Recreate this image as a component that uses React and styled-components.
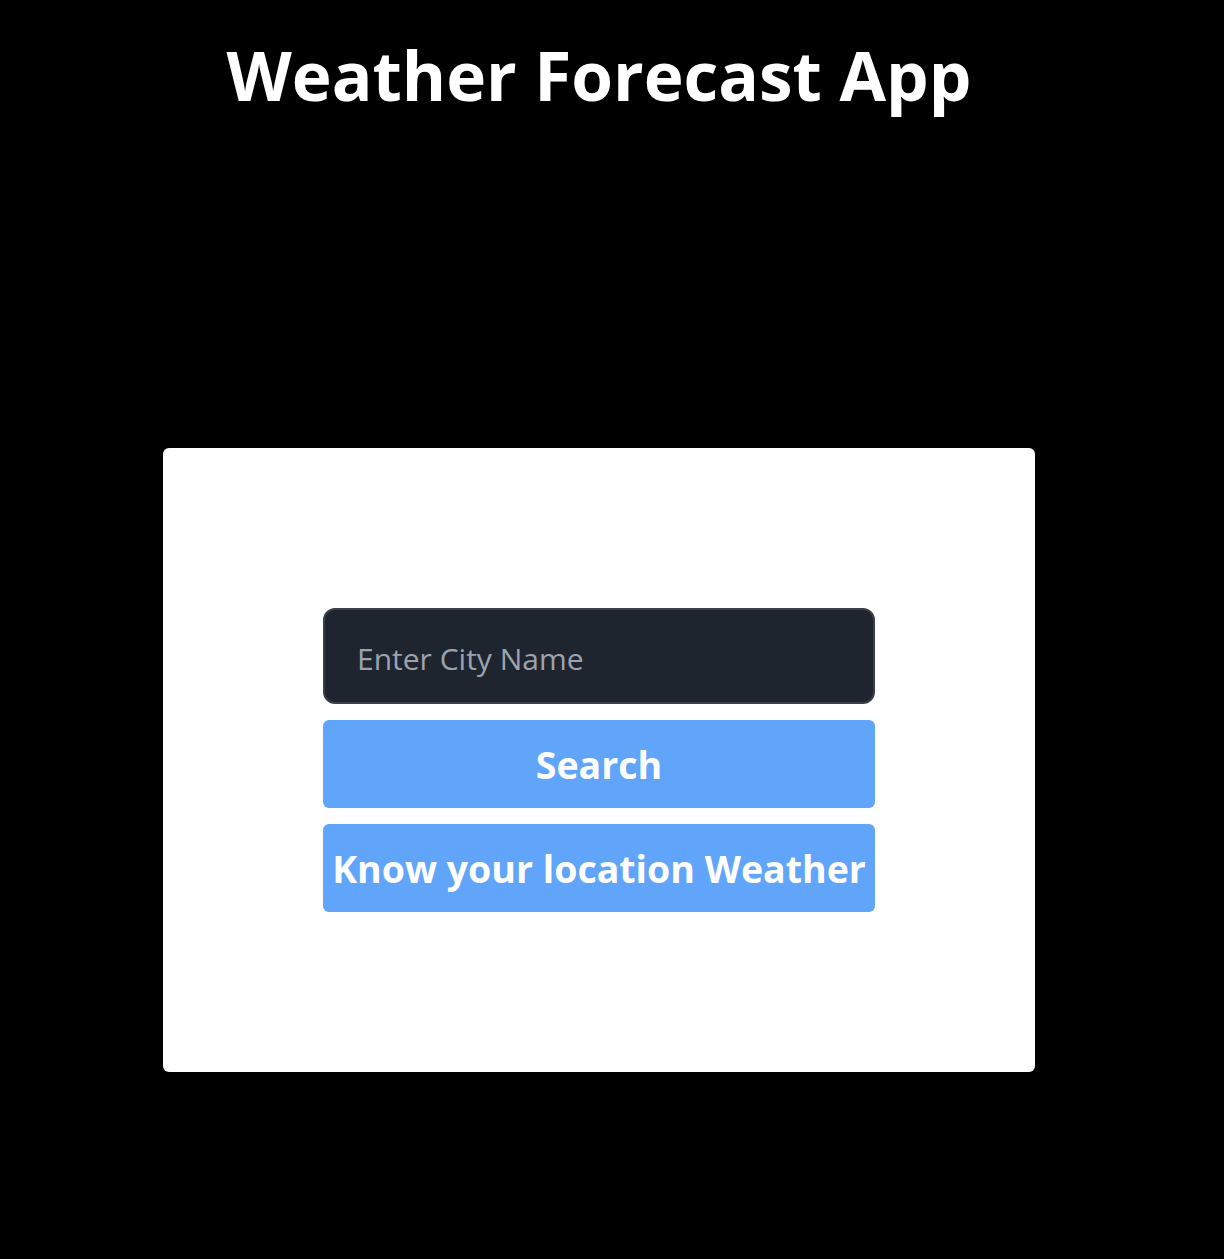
import React, { useState } from 'react';
import styled, { createGlobalStyle } from 'styled-components';

const GlobalStyle = createGlobalStyle`
    html, body {
        margin: 0;
        padding: 0;
        background: #000;
    }
    body {
        font-family: "Open Sans", "Noto Sans", sans-serif;
        color: #fff;
    }
`;

const Page = styled.div`
    width: 1198px;
    min-height: 1259px;
    display: flex;
    flex-direction: column;
    align-items: center;
`;

const Title = styled.h1`
    margin: 24px 0 0;
    height: 102px;
    font-size: 67.5px;
    line-height: 102px;
    font-weight: 700;
`;

const Card = styled.div`
    margin-top: 322px;
    width: 872px;
    box-sizing: border-box;
    padding: 160px;
    background: #fff;
    border-radius: 6px;
    display: flex;
    flex-direction: column;
    gap: 16px;
`;

const CityInput = styled.input`
    height: 96px;
    box-sizing: border-box;
    padding: 4px 32px 0;
    background: #1f252e;
    border: 2px solid #394049;
    border-radius: 12px;
    color: #fff;
    font-family: "Open Sans", sans-serif;
    font-size: 30px;
    outline: none;

    &::placeholder {
        color: #9ca3af;
    }
`;

const Button = styled.button`
    height: 88px;
    border: none;
    border-radius: 6px;
    background: #60a5fa;
    color: #fff;
    font-family: "Open Sans", sans-serif;
    font-size: 37.5px;
    font-weight: 700;
    padding: 0;
    cursor: pointer;
`;

const App = () => {
    const [city, setCity] = useState('');

    return (
        <>
            <GlobalStyle />
            <Page>
                <Title>Weather Forecast App</Title>
                <Card>
                    <CityInput
                        value={city}
                        onChange={(e) => setCity(e.target.value)}
                        placeholder="Enter City Name"
                    />
                    <Button>Search</Button>
                    <Button>Know your location Weather</Button>
                </Card>
            </Page>
        </>
    );
};

export default App;
